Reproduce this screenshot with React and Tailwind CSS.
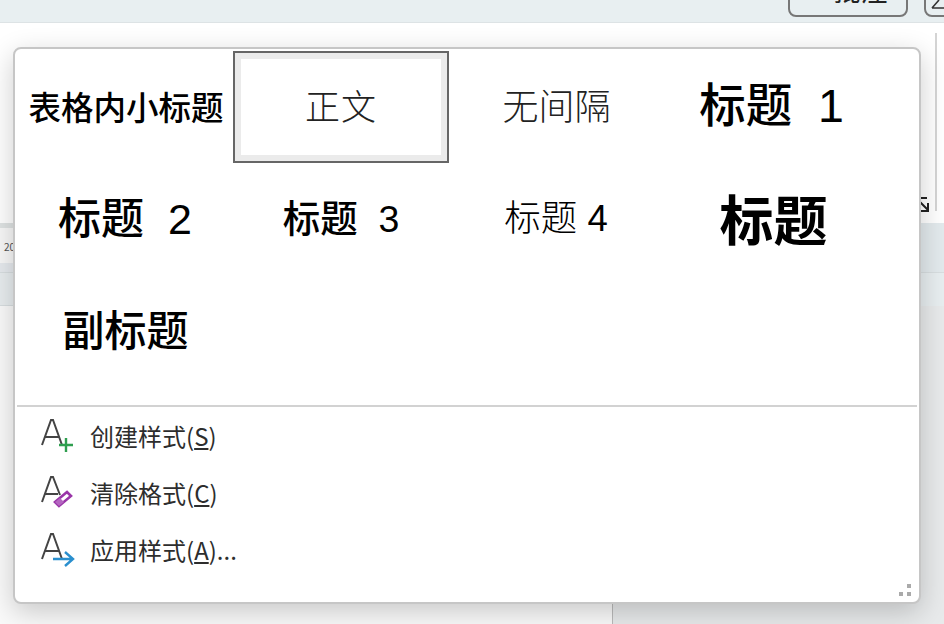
const CELL_FONT = "font-['Liberation_Sans','Noto_Sans_CJK_SC',sans-serif]";

function StyleCell({ children, className = "" }) {
  return <div className={`flex h-[111px] items-center justify-center whitespace-nowrap text-black ${CELL_FONT} ${className}`}>{children}</div>;
}

function MenuRow({ icon, label, ul, tail }) {
  return (
    <div className="flex h-[57px] items-center pl-[25px]">
      <div className="mt-[4px] h-[40px] w-[50px] shrink-0">{icon}</div>
      <span className="text-[24px] text-[#2d2d2d]">
        {label}(<span className="underline underline-offset-2">{ul}</span>){tail}
      </span>
    </div>
  );
}

const A = ({ short }) => (
  <path d={short ? "M2 27 L11 2 L13 2 L20 20 M5.5 19 H18" : "M2 27 L11 2 L13 2 L22 27 M5.5 19 H18.5"} fill="none" stroke="#444" strokeWidth="2" />
);

export default function App() {
  return (
    <div className="relative h-[624px] w-[944px] overflow-hidden bg-white font-['Noto_Sans_CJK_SC','Noto_Sans',sans-serif]">
      <div className="relative h-[23px] border-b border-[#dde3e5] bg-[#e8eff1]">
        <div className="absolute left-[788px] top-[-36px] flex h-[53px] w-[120px] items-center justify-center gap-[18px] rounded-b-[8px] border-2 border-[#777] text-[27px] text-[#222]">
          <span className="text-[14px]">▸</span>
          <span>批注</span>
        </div>
        <div className="absolute left-[924px] top-[-30px] h-[47px] w-[30px] rounded-bl-[8px] border-2 border-[#777]">
          <svg viewBox="0 0 20 10" className="absolute left-[5px] top-[28px] h-[10px] w-[20px]">
            <path d="M1 8 L8 0 M1 8 H14" stroke="#333" strokeWidth="1.6" fill="none" />
          </svg>
        </div>
      </div>
      <div className="relative h-[200px] bg-white">
        <div className="absolute left-[935px] top-[10px] h-[178px] w-[2px] bg-[#d4d4d4]" />
        <svg viewBox="0 0 14 16" className="absolute left-[917px] top-[173px] h-[16px] w-[14px]">
          <path d="M0 2 H10 M2 5 L11 14 M11 7 V15 H0" stroke="#222" strokeWidth="2" fill="none" />
        </svg>
      </div>
      <div className="flex h-[83px]">
        <div className="flex-1">
          <div className="h-[5px] bg-[#dfe3e3]" />
          <div className="h-[35px] bg-[#f8f8f8] pl-[4px] pt-[13px] text-[10px] leading-[12px] text-[#555]">20</div>
          <div className="h-[10px] border-b border-[#d8dee0] bg-[#e6eaee]" />
          <div className="h-[33px] border-b border-[#d8dee0] bg-[#e8edef]" />
        </div>
        <div className="w-[23px]">
          <div className="h-[50px] border-b border-[#d8dee0] bg-[#e3eaed]" />
          <div className="h-[33px] bg-[#e8eef0]" />
        </div>
      </div>
      <div className="flex h-[318px]">
        <div className="w-[613px] border-r border-[#bbb] bg-[#fafafa]" />
        <div className="flex-1 bg-[#e8eaeb]" />
      </div>

      <div className="absolute left-[13px] top-[47px] h-[557px] w-[908px] rounded-[8px] border-2 border-[#c6c6c6] bg-white shadow-[0_8px_28px_rgba(0,0,0,0.2)]">
        <div className="grid grid-cols-[214px_216px_215px_215px] pl-[4px] pt-[2px]">
          <StyleCell className="pt-[6px] text-[32.5px] font-medium">表格内小标题</StyleCell>
          <div className="flex h-[112px] items-center justify-center border-2 border-[#666] bg-white outline outline-[6px] outline-offset-[-8px] outline-[#ebebeb]">
            <span className="pb-[4px] text-[35px] font-extralight tracking-[1px] text-[#222]">正文</span>
          </div>
          <StyleCell><span className="pt-[2px] text-[36px] font-extralight text-[#222]">无间隔</span></StyleCell>
          <StyleCell className="text-[46.5px] font-medium">标题&nbsp;&nbsp;1</StyleCell>
          <StyleCell className="pr-[2px] pt-[2px] text-[43px] font-medium">标题&nbsp;&nbsp;2</StyleCell>
          <StyleCell className="pt-[2px] text-[37.5px] font-medium">标题&nbsp;&nbsp;3</StyleCell>
          <StyleCell className="pr-[1px] pt-[2px] text-[36.5px] font-light">标题 4</StyleCell>
          <StyleCell className="pl-[4px] pt-[8px] text-[54px] font-bold">标题</StyleCell>
          <StyleCell className="pr-[1px] pt-[4px] text-[42px] font-medium">副标题</StyleCell>
        </div>
        <div className="mx-[2px] mt-[20px] h-[2px] bg-[#d2d2d2]" />
        <div>
          <MenuRow
            label="创建样式"
            ul="S"
            icon={
              <svg viewBox="0 0 50 40" className="h-[40px] w-[50px]">
                <A />
                <path d="M19 27 H33 M26 20 V34" stroke="#2f9e4f" strokeWidth="2.4" fill="none" />
              </svg>
            }
          />
          <MenuRow
            label="清除格式"
            ul="C"
            icon={
              <svg viewBox="0 0 50 40" className="h-[40px] w-[50px]">
                <A short />
                <path d="M15 27 L27 17 L31 21 L19 31 Z" fill="#fff" stroke="#9a35a8" strokeWidth="2.6" />
                <path d="M15 27 L20 23 L24 27 L19 31 Z" fill="#b466c0" />
              </svg>
            }
          />
          <MenuRow
            label="应用样式"
            ul="A"
            tail="..."
            icon={
              <svg viewBox="0 0 50 40" className="h-[40px] w-[50px]">
                <A />
                <path d="M13 27 H33 M25 20 L33 27 L25 34" stroke="#2a8fce" strokeWidth="2.4" fill="none" />
              </svg>
            }
          />
        </div>
        <div className="absolute bottom-[6px] right-[8px] grid grid-cols-2 gap-[4px]">
          <span className="h-[4px] w-[4px]" />
          <span className="h-[4px] w-[4px] bg-[#aaa]" />
          <span className="h-[4px] w-[4px] bg-[#aaa]" />
          <span className="h-[4px] w-[4px] bg-[#aaa]" />
        </div>
      </div>
    </div>
  );
}
